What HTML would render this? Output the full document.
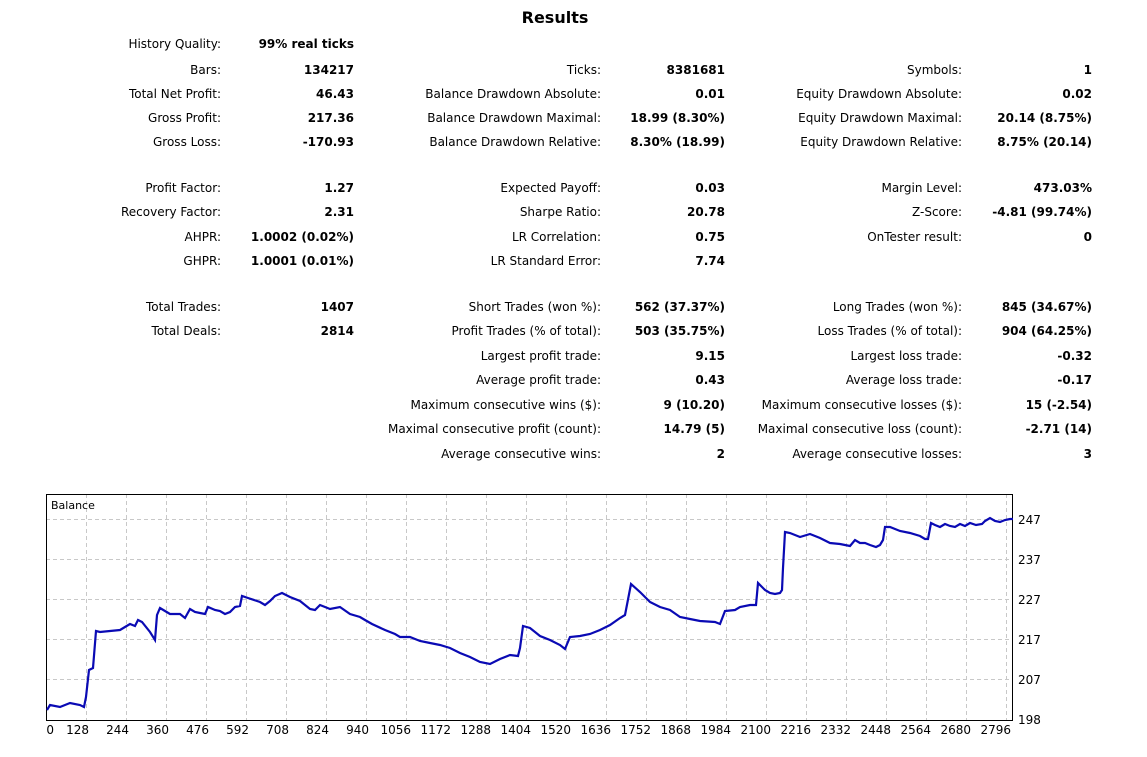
<!DOCTYPE html>
<html><head><meta charset="utf-8"><style>
body{margin:0;width:1147px;height:757px;background:#fff;position:relative;font-family:"DejaVu Sans","Liberation Sans",sans-serif;color:#000;overflow:hidden}
.t{position:absolute;font-size:12px;white-space:nowrap;transform:translateY(-50%)}
.l{text-align:right}
.v{font-weight:bold;text-align:right}
h1{position:absolute;margin:0;top:8px;left:0;width:1110px;text-align:center;font-size:16px;font-weight:bold}
</style></head><body>
<h1>Results</h1>
<div id="rows"></div>
<svg width="1147" height="757" style="position:absolute;left:0;top:0" font-family="DejaVu Sans, Liberation Sans, sans-serif" font-size="12">
<g stroke="#c8c8c8" stroke-dasharray="4,3" stroke-width="1">
<line x1="46" y1="519.5" x2="1013" y2="519.5"/><line x1="46" y1="559.5" x2="1013" y2="559.5"/><line x1="46" y1="599.5" x2="1013" y2="599.5"/><line x1="46" y1="639.5" x2="1013" y2="639.5"/><line x1="46" y1="679.5" x2="1013" y2="679.5"/>
<line x1="86.5" y1="494" x2="86.5" y2="720"/><line x1="126.5" y1="494" x2="126.5" y2="720"/><line x1="166.5" y1="494" x2="166.5" y2="720"/><line x1="206.5" y1="494" x2="206.5" y2="720"/><line x1="246.5" y1="494" x2="246.5" y2="720"/><line x1="286.5" y1="494" x2="286.5" y2="720"/><line x1="326.5" y1="494" x2="326.5" y2="720"/><line x1="366.5" y1="494" x2="366.5" y2="720"/><line x1="406.5" y1="494" x2="406.5" y2="720"/><line x1="446.5" y1="494" x2="446.5" y2="720"/><line x1="486.5" y1="494" x2="486.5" y2="720"/><line x1="526.5" y1="494" x2="526.5" y2="720"/><line x1="566.5" y1="494" x2="566.5" y2="720"/><line x1="606.5" y1="494" x2="606.5" y2="720"/><line x1="646.5" y1="494" x2="646.5" y2="720"/><line x1="686.5" y1="494" x2="686.5" y2="720"/><line x1="726.5" y1="494" x2="726.5" y2="720"/><line x1="766.5" y1="494" x2="766.5" y2="720"/><line x1="806.5" y1="494" x2="806.5" y2="720"/><line x1="846.5" y1="494" x2="846.5" y2="720"/><line x1="886.5" y1="494" x2="886.5" y2="720"/><line x1="926.5" y1="494" x2="926.5" y2="720"/><line x1="966.5" y1="494" x2="966.5" y2="720"/><line x1="1006.5" y1="494" x2="1006.5" y2="720"/>
</g>
<rect x="46.5" y="494.5" width="966" height="226" fill="none" stroke="#000"/>
<text x="51" y="509" font-size="11">Balance</text>
<polyline fill="none" stroke="#0a0ab4" stroke-width="2.2" points="47,710 50,705 60,707 70,703 80,705 84,707 86,697 89,670 93,668 96,631 100,632 110,631 120,630 125,627 130,624 135,626 138,620 142,622 150,632 155,640 157,615 160,608 165,611 170,614 180,614 185,618 190,609 195,612 200,613 205,614 208,607 215,610 220,611 225,614 230,612 235,607 240,606 242,596 248,598 260,602 265,605 270,601 275,596 282,593 290,597 300,601 310,609 315,610 320,605 330,609 340,607 350,614 360,617 365,620 372,624 385,630 395,634 400,637 410,637 420,641 430,643 440,645 450,648 460,653 470,657 480,662 490,664 500,659 510,655 518,656 520,648 523,626 530,628 540,636 550,640 560,645 565,649 570,637 580,636 590,634 600,630 610,625 620,618 625,615 631,584 640,592 650,602 660,607 670,610 680,617 690,619 700,621 715,622 720,624 725,611 735,610 740,607 750,605 756,605 758,583 765,590 770,593 775,594 780,593 782,590 783,568 785,532 790,533 800,537 810,534 820,538 830,543 840,544 850,546 855,540 860,543 865,543 870,545 876,547 880,545 883,540 885,527 890,527 900,531 910,533 920,536 925,539 928,539 931,523 935,525 940,527 945,524 950,526 955,527 960,524 965,526 970,523 976,525 982,524 985,521 990,518 995,521 1000,522 1005,520 1010,519 1013,519"/>
<g font-size="12">
<text x="1018" y="524">247</text><text x="1018" y="564">237</text><text x="1018" y="604">227</text><text x="1018" y="644">217</text><text x="1018" y="684">207</text><text x="1018" y="724">198</text>
</g>
<g font-size="12" text-anchor="end">
<text x="54" y="734">0</text><text x="89" y="734">128</text><text x="129" y="734">244</text><text x="169" y="734">360</text><text x="209" y="734">476</text><text x="249" y="734">592</text><text x="289" y="734">708</text><text x="329" y="734">824</text><text x="369" y="734">940</text><text x="411" y="734">1056</text><text x="451" y="734">1172</text><text x="491" y="734">1288</text><text x="531" y="734">1404</text><text x="571" y="734">1520</text><text x="611" y="734">1636</text><text x="651" y="734">1752</text><text x="691" y="734">1868</text><text x="731" y="734">1984</text><text x="771" y="734">2100</text><text x="811" y="734">2216</text><text x="851" y="734">2332</text><text x="891" y="734">2448</text><text x="931" y="734">2564</text><text x="971" y="734">2680</text><text x="1011" y="734">2796</text>
</g>
</svg>
<script>
var R=[[43,"History Quality:","99% real ticks"],
[69,"Bars:","134217","Ticks:","8381681","Symbols:","1"],
[93,"Total Net Profit:","46.43","Balance Drawdown Absolute:","0.01","Equity Drawdown Absolute:","0.02"],
[117,"Gross Profit:","217.36","Balance Drawdown Maximal:","18.99 (8.30%)","Equity Drawdown Maximal:","20.14 (8.75%)"],
[141,"Gross Loss:","-170.93","Balance Drawdown Relative:","8.30% (18.99)","Equity Drawdown Relative:","8.75% (20.14)"],
[187,"Profit Factor:","1.27","Expected Payoff:","0.03","Margin Level:","473.03%"],
[211,"Recovery Factor:","2.31","Sharpe Ratio:","20.78","Z-Score:","-4.81 (99.74%)"],
[236,"AHPR:","1.0002 (0.02%)","LR Correlation:","0.75","OnTester result:","0"],
[260,"GHPR:","1.0001 (0.01%)","LR Standard Error:","7.74"],
[306,"Total Trades:","1407","Short Trades (won %):","562 (37.37%)","Long Trades (won %):","845 (34.67%)"],
[330,"Total Deals:","2814","Profit Trades (% of total):","503 (35.75%)","Loss Trades (% of total):","904 (64.25%)"],
[355,"","","Largest profit trade:","9.15","Largest loss trade:","-0.32"],
[379,"","","Average profit trade:","0.43","Average loss trade:","-0.17"],
[404,"","","Maximum consecutive wins ($):","9 (10.20)","Maximum consecutive losses ($):","15 (-2.54)"],
[428,"","","Maximal consecutive profit (count):","14.79 (5)","Maximal consecutive loss (count):","-2.71 (14)"],
[453,"","","Average consecutive wins:","2","Average consecutive losses:","3"]];
var E=[221,354,601,725,962,1092],h="";
R.forEach(function(r){for(var i=1;i<r.length;i++){if(!r[i])continue;var c=i-1;
h+='<div class="t '+(c%2?'v':'l')+'" style="top:'+(r[0]+1)+'px;right:'+(1147-E[c])+'px">'+r[i]+'</div>';}});
document.getElementById("rows").innerHTML=h;
</script>
</body></html>
